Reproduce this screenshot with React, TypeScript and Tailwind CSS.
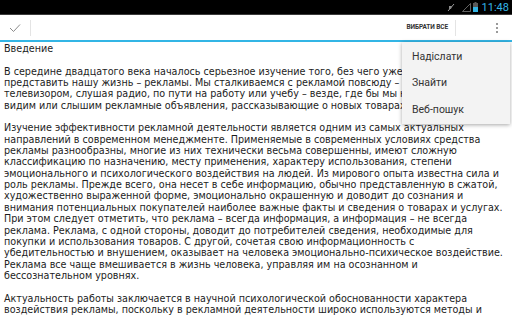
import type { JSX } from 'react'

const intro: string[] = [
    'В середине двадцатого века началось серьезное изучение того, без чего уже не',
    'представить нашу жизнь – рекламы. Мы сталкиваемся с рекламой повсюду – перед',
    'телевизором, слушая радио, по пути на работу или учебу – везде, где бы мы ни',
    'видим или слышим рекламные объявления, рассказывающие о новых товарах и',
]

const body: string[] = [
    'Изучение эффективности рекламной деятельности является одним из самых актуальных',
    'направлений в современном менеджменте. Применяемые в современных условиях средства',
    'рекламы разнообразны, многие из них технически весьма совершенны, имеют сложную',
    'классификацию по назначению, месту применения, характеру использования, степени',
    'эмоционального и психологического воздействия на людей. Из мирового опыта известна сила и',
    'роль рекламы. Прежде всего, она несет в себе информацию, обычно представленную в сжатой,',
    'художественно выраженной форме, эмоционально окрашенную и доводит до сознания и',
    'внимания потенциальных покупателей наиболее важные факты и сведения о товарах и услугах.',
    'При этом следует отметить, что реклама – всегда информация, а информация – не всегда',
    'реклама. Реклама, с одной стороны, доводит до потребителей сведения, необходимые для',
    'покупки и использования товаров. С другой, сочетая свою информационность с',
    'убедительностью и внушением, оказывает на человека эмоционально-психическое воздействие.',
    'Реклама все чаще вмешивается в жизнь человека, управляя им на осознанном и',
    'бессознательном уровнях.',
]

const outro: string[] = [
    'Актуальность работы заключается в научной психологической обоснованности характера',
    'воздействия рекламы, поскольку в рекламной деятельности широко используются методы и',
]

const Lines = ({ lines }: { lines: string[] }): JSX.Element => (
    <div>
        {lines.map((line, i) => (
            <div key={i} className="whitespace-nowrap h-[11.35px]">{line}</div>
        ))}
    </div>
)

const StatusBar = (): JSX.Element => (
    <div className="h-[15px] bg-black border-b border-[#3a3a3a] flex items-center justify-end pr-[3px] gap-[4px]">
        {/* muted */}
        <svg width="8" height="9" viewBox="0 0 8 9" className="mr-[3px]">
            <path d="M1 8 L7 1" stroke="#9a9a9a" strokeWidth="1" />
            <path d="M2 3 L5 3 L4 6 L2 6 Z" fill="#8a8a8a" />
        </svg>
        {/* signal */}
        <svg width="9" height="9" viewBox="0 0 9 9">
            <path d="M0.5 8.5 L8.5 8.5 L8.5 0.5 Z" fill="none" stroke="#7a7a7a" strokeWidth="0.8" />
        </svg>
        {/* battery */}
        <svg width="5" height="10" viewBox="0 0 5 10" className="-ml-[2px]">
            <rect x="1.5" y="0" width="2" height="1" fill="#5a5a5a" />
            <rect x="0" y="1" width="5" height="4" fill="#5a5a5a" />
            <rect x="0" y="5" width="5" height="5" fill="#33b5e5" />
        </svg>
        <span className="text-[11px] leading-none text-[#33b5e5] font-['Roboto',sans-serif]">11:48</span>
    </div>
)

const ActionBar = (): JSX.Element => (
    <div className="h-[25px] bg-white flex items-center">
        <div className="w-[30px] h-full flex items-center justify-center">
            <svg width="12" height="10" viewBox="0 0 12 10">
                <path d="M1 5 L4.5 8.5 L11 1.5" fill="none" stroke="#8a8a8a" strokeWidth="1" />
            </svg>
        </div>
        <div className="w-px h-[16px] bg-[#e4e4e4]" />
        <div className="flex-1" />
        <div className="px-[7px] text-[6.5px] font-bold text-[#333] font-['Roboto',sans-serif] tracking-[-0.1px]">ВИБРАТИ ВСЕ</div>
        <div className="w-px h-[16px] bg-[#e4e4e4]" />
        <div className="w-[56px] h-full flex items-center justify-end pr-[14px]">
            <div className="flex flex-col gap-[2px]">
                <div className="w-[2px] h-[2px] bg-[#9a9a9a]" />
                <div className="w-[2px] h-[2px] bg-[#9a9a9a]" />
                <div className="w-[2px] h-[2px] bg-[#9a9a9a]" />
            </div>
        </div>
    </div>
)

const Menu = (): JSX.Element => (
    <div className="absolute left-[402px] top-[42px] w-[108px] h-[82px] bg-[#f3f3f3] shadow-[0_1px_4px_rgba(0,0,0,0.35)] flex flex-col pt-[1px] font-['Roboto',sans-serif] text-[10.5px] text-[#333]">
        {['Надіслати', 'Знайти', 'Веб-пошук'].map((item) => (
            <div key={item} className="h-[26.8px] flex items-center pl-[10px]">{item}</div>
        ))}
    </div>
)

const App = (): JSX.Element => {
    return (
        <div className="relative w-[512px] h-[320px] overflow-hidden bg-white">
            <StatusBar />
            <ActionBar />
            <div className="h-[2px] bg-[#33b5e5]" />
            <div className="px-[4px] pt-[1px] text-[9.6px] leading-[11.35px] text-[#1c1c1c] font-['DejaVu_Sans',sans-serif] flex flex-col gap-[11.35px]">
                <Lines lines={['Введение']} />
                <Lines lines={intro} />
                <Lines lines={body} />
                <Lines lines={outro} />
            </div>
            <Menu />
        </div>
    )
}

export default App
